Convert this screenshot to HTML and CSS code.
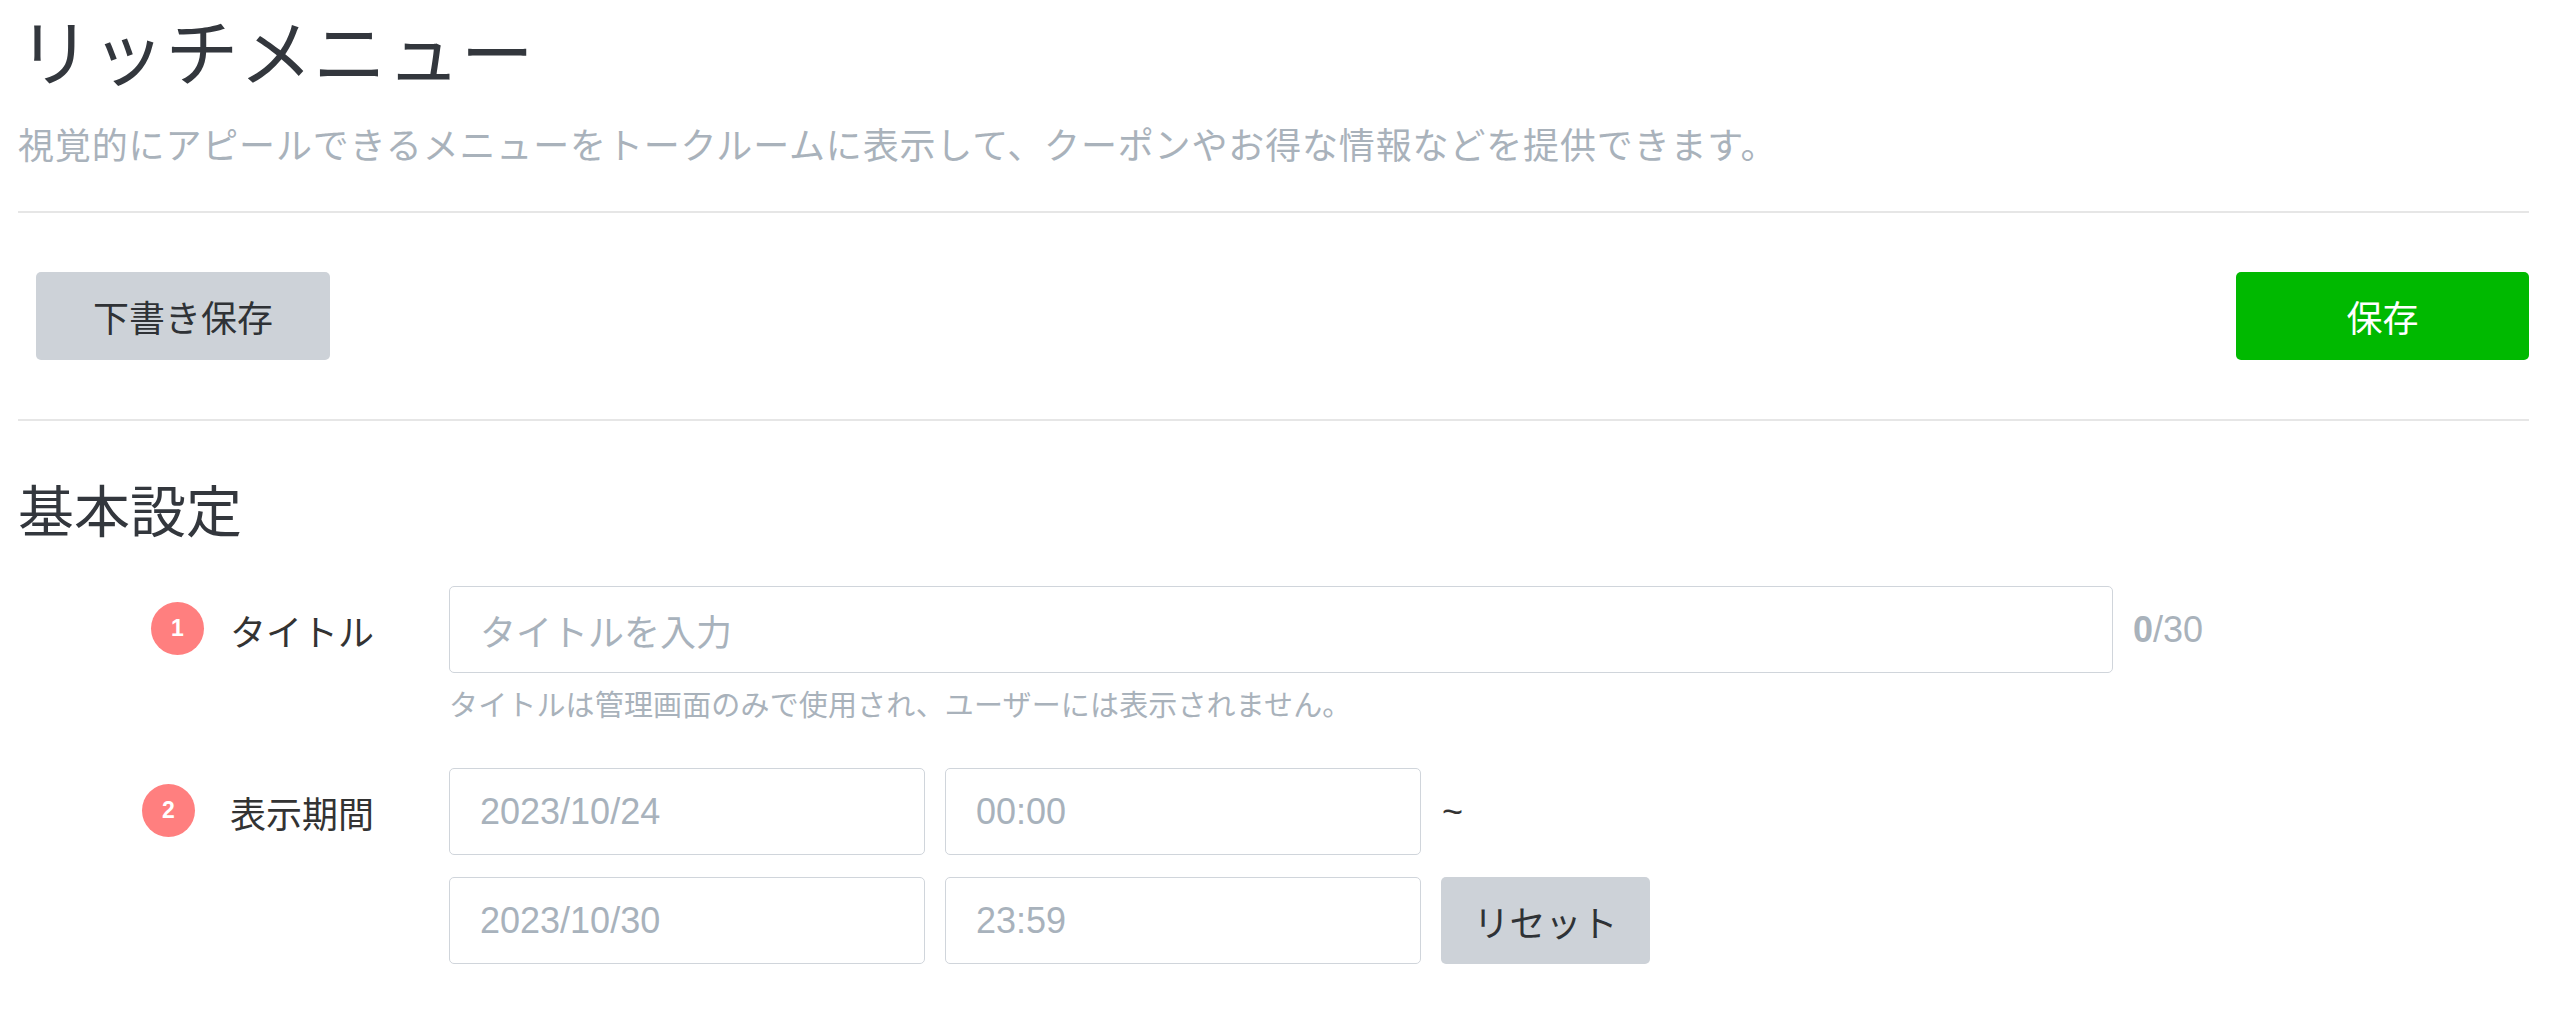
FILE: index.html
```html
<!DOCTYPE html>
<html lang="ja">
<head>
<meta charset="utf-8">
<title>リッチメニュー</title>
<link rel="stylesheet" href="styles.css">
</head>
<body>
<div class="page">
  <header class="page-header">
    <h1 class="page-title">リッチメニュー</h1>
    <p class="page-desc">視覚的にアピールできるメニューをトークルームに表示して、クーポンやお得な情報などを提供できます。</p>
  </header>
  <hr class="divider">
  <div class="toolbar">
    <button class="btn btn-secondary btn-draft" type="button">下書き保存</button>
    <button class="btn btn-primary" type="button">保存</button>
  </div>
  <hr class="divider">
  <section class="section">
    <h2 class="section-title">基本設定</h2>
    <div class="form">
      <div class="form-row">
        <div class="form-label">
          <span class="badge-slot"><span class="badge">1</span></span>
          <span class="label-text">タイトル</span>
        </div>
        <div class="form-control">
          <div class="input-line">
            <input class="input input-title" type="text" placeholder="タイトルを入力">
            <span class="counter"><b>0</b>/30</span>
          </div>
          <p class="help">タイトルは管理画面のみで使用され、ユーザーには表示されません。</p>
        </div>
      </div>
      <div class="form-row">
        <div class="form-label">
          <span class="badge-slot badge-slot-wide"><span class="badge">2</span></span>
          <span class="label-text">表示期間</span>
        </div>
        <div class="form-control form-control-stack">
          <div class="input-line">
            <input class="input input-date" type="text" value="2023/10/24" readonly>
            <input class="input input-time" type="text" value="00:00" readonly>
            <span class="tilde">~</span>
          </div>
          <div class="input-line">
            <input class="input input-date" type="text" value="2023/10/30" readonly>
            <input class="input input-time" type="text" value="23:59" readonly>
            <button class="btn btn-secondary btn-reset" type="button">リセット</button>
          </div>
        </div>
      </div>
    </div>
  </section>
</div>
</body>
</html>
```

FILE: styles.css
```css
* { box-sizing: border-box; }

html, body {
  margin: 0;
  padding: 0;
  background: #ffffff;
}

body {
  font-family: "Noto Sans CJK JP", "Liberation Sans", sans-serif;
  color: #333333;
}

.page {
  padding: 0 31px 0 18px;
}

.page-header {
  padding-top: 5px;
}

.page-title {
  margin: 0;
  font-size: 73px;
  line-height: 86px;
  font-weight: 400;
  letter-spacing: 0.8px;
  color: #33373d;
}

.page-desc {
  margin: 25px 0 0;
  font-size: 36px;
  line-height: 54px;
  letter-spacing: 0.85px;
  color: #a9b2bb;
}

.divider {
  margin: 0;
  border: 0;
  border-top: 2px solid #e6e6e6;
  height: 0;
}

.page-header + .divider {
  margin-top: 41px;
}

.toolbar {
  display: flex;
  justify-content: space-between;
  align-items: center;
  padding: 59px 0;
}

.btn {
  display: inline-flex;
  align-items: center;
  justify-content: center;
  border: 0;
  border-radius: 5px;
  font-family: "Noto Sans CJK JP", "Liberation Sans", sans-serif;
  font-size: 36px;
  line-height: 1;
  cursor: pointer;
}

.btn-secondary {
  background: #cdd2d8;
  color: #2f3236;
}

.btn-primary {
  background: #00b900;
  color: #ffffff;
  width: 293px;
  height: 88px;
}

.btn-draft {
  width: 294px;
  height: 88px;
  margin-left: 18px;
}

.section {
  padding-top: 47px;
}

.section-title {
  margin: 0;
  font-size: 56px;
  line-height: 80px;
  font-weight: 400;
  color: #33373d;
}

.form {
  margin-top: 38px;
  display: flex;
  flex-direction: column;
  gap: 45px;
}

.form-row {
  display: grid;
  grid-template-columns: 431px 1fr;
  align-items: start;
}

.form-label {
  display: flex;
  align-items: center;
  height: 87px;
}

.badge-slot {
  width: 194px;
  display: flex;
  justify-content: flex-end;
  padding-right: 8px;
}

.badge-slot-wide {
  padding-right: 17px;
}

.badge {
  width: 53px;
  height: 53px;
  border-radius: 50%;
  background: #ff7f7f;
  color: #ffffff;
  font-family: "Liberation Sans", sans-serif;
  font-weight: 700;
  font-size: 23px;
  display: flex;
  align-items: center;
  justify-content: center;
  margin-top: -3px;
}

.label-text {
  margin-left: 18px;
  font-size: 36px;
  line-height: 1;
  color: #333333;
}

.form-control {
  display: flex;
  flex-direction: column;
}

.form-control-stack {
  gap: 22px;
}

.input-line {
  display: flex;
  align-items: center;
  gap: 20px;
}

.input {
  height: 87px;
  border: 1px solid #d0d5db;
  border-radius: 5px;
  background: #ffffff;
  padding: 0 30px;
  font-family: "Liberation Sans", "Noto Sans CJK JP", sans-serif;
  font-size: 36px;
  color: #a8b2bc;
  outline: none;
}

.input::placeholder {
  color: #a8b2bc;
  opacity: 1;
}

.input-title {
  width: 1664px;
  font-family: "Noto Sans CJK JP", sans-serif;
}

.input-date,
.input-time {
  width: 476px;
}

.counter {
  font-family: "Liberation Sans", sans-serif;
  font-size: 36px;
  color: #a9b2bb;
}

.counter b {
  font-weight: 700;
}

.help {
  margin: 10px 0 0;
  font-size: 29px;
  line-height: 40px;
  letter-spacing: 0.15px;
  color: #a9b2bb;
}

.tilde {
  font-family: "Liberation Sans", sans-serif;
  font-size: 36px;
  color: #333333;
  margin-left: 1px;
}

.btn-reset {
  width: 209px;
  height: 87px;
}
```
